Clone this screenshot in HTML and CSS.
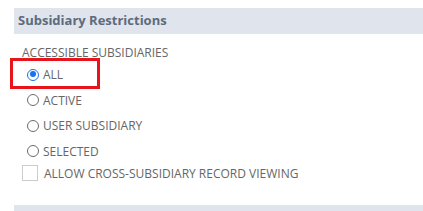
FILE: index.html
```html
<!DOCTYPE html>
<html>
<head>
<meta charset="utf-8">
<link rel="stylesheet" href="styles.css">
</head>
<body>
<div class="section-header">Subsidiary Restrictions</div>
<div class="section-body">
  <div class="field-label">ACCESSIBLE SUBSIDIARIES</div>
  <div class="options">
    <div class="option highlighted"><span class="radio checked"></span><span class="opt-text">ALL</span></div>
    <div class="option"><span class="radio"></span><span class="opt-text">ACTIVE</span></div>
    <div class="option"><span class="radio"></span><span class="opt-text">USER SUBSIDIARY</span></div>
    <div class="option"><span class="radio"></span><span class="opt-text">SELECTED</span></div>
  </div>
  <div class="check-row"><span class="checkbox"></span><span class="opt-text">ALLOW CROSS-SUBSIDIARY RECORD VIEWING</span></div>
</div>
<div class="section-footer"></div>
</body>
</html>
```
FILE: styles.css
```css
html, body {
  margin: 0;
  padding: 0;
  background: #ffffff;
  font-family: "Open Sans", "Liberation Sans", sans-serif;
  width: 423px;
  height: 211px;
  overflow: hidden;
}
.section-header {
  margin: 8px 0 0 14px;
  height: 26px;
  line-height: 25px;
  background: #dfe4ed;
  color: #5e6b7c;
  font-weight: bold;
  font-size: 13px;
  padding-left: 4px;
}
.section-body {
  padding: 10px 0 0 22px;
  height: 171px;
  box-sizing: border-box;
}
.field-label {
  font-size: 12px;
  color: #666666;
  line-height: 17px;
}
.options {
  display: flex;
  flex-direction: column;
  margin-top: 1px;
}
.option {
  display: flex;
  align-items: center;
  height: 25.5px;
  padding-left: 5px;
  position: relative;
}
.option.highlighted::after {
  content: "";
  position: absolute;
  left: -12px;
  top: -4px;
  width: 84px;
  height: 25px;
  border: 3px solid #e8141c;
}
.radio {
  width: 12px;
  height: 12px;
  box-sizing: border-box;
  border: 1px solid #6b6b6b;
  border-radius: 50%;
  margin-right: 4px;
  position: relative;
  flex: none;
}
.radio.checked {
  border: 1.5px solid #1a73e8;
}
.radio.checked::after {
  content: "";
  position: absolute;
  left: 1.5px;
  top: 1.5px;
  width: 6px;
  height: 6px;
  border-radius: 50%;
  background: #1a73e8;
}
.opt-text {
  font-size: 12px;
  color: #666666;
}
.check-row {
  display: flex;
  align-items: center;
  margin-top: 1px;
  height: 16px;
}
.checkbox {
  width: 16px;
  height: 16px;
  box-sizing: border-box;
  border: 1px solid #cccccc;
  margin-right: 6px;
  flex: none;
}
.section-footer {
  margin-left: 14px;
  height: 6px;
  background: #dfe4ed;
}
```
